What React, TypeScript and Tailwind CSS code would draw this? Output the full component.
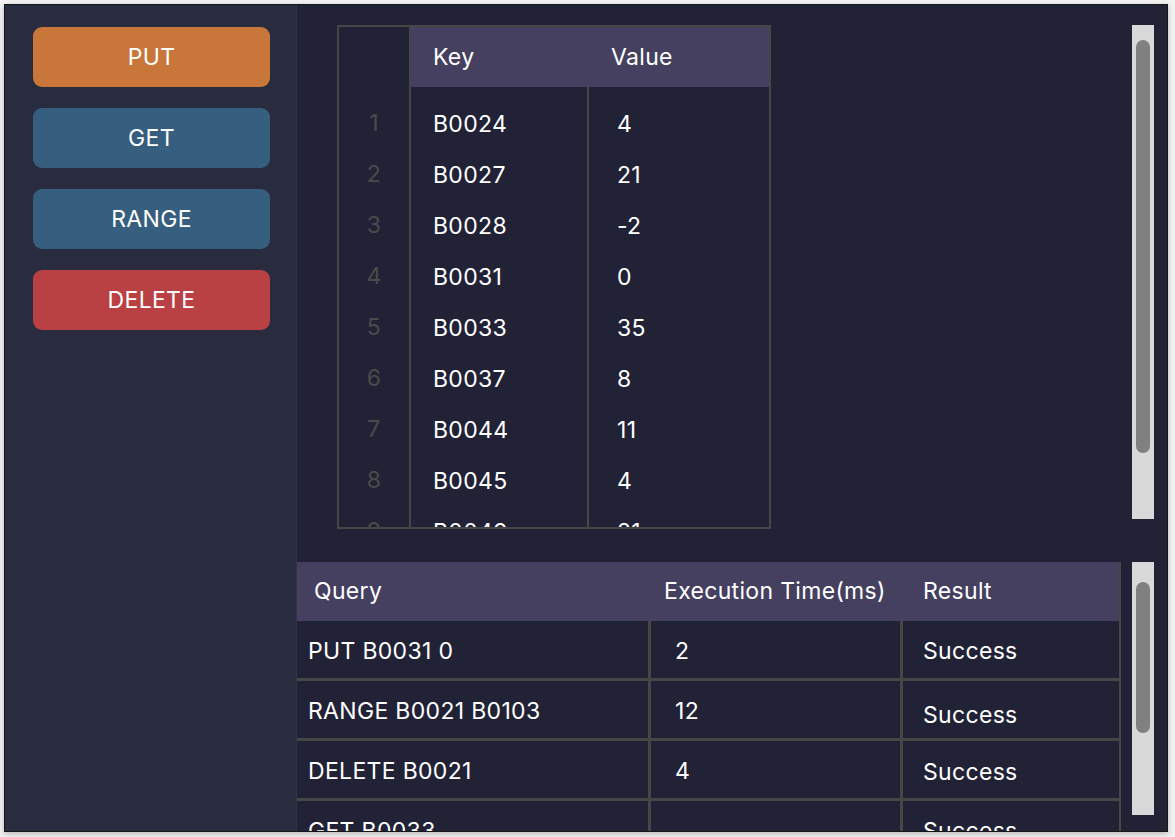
import React from 'react';

const keys = [
  ['B0024', '4'],
  ['B0027', '21'],
  ['B0028', '-2'],
  ['B0031', '0'],
  ['B0033', '35'],
  ['B0037', '8'],
  ['B0044', '11'],
  ['B0045', '4'],
  ['B0049', '21'],
];

const queries = [
  { q: 'PUT B0031 0', t: '2', r: 'Success', rp: 'pt-[4px]' },
  { q: 'RANGE B0021 B0103', t: '12', r: 'Success', rp: 'pt-[11px]' },
  { q: 'DELETE B0021', t: '4', r: 'Success', rp: 'pt-[6px]' },
  { q: 'GET B0033', t: '', r: 'Success', rp: 'pt-[4px]' },
];

const buttons = [
  { label: 'PUT', cls: 'bg-[#c8763a]' },
  { label: 'GET', cls: 'bg-[#365e7e]' },
  { label: 'RANGE', cls: 'bg-[#365e7e]' },
  { label: 'DELETE', cls: 'bg-[#b94043]' },
];

const Scrollbar: React.FC<{ h: string; thumbTop: string; thumbH: string }> = ({ h, thumbTop, thumbH }) => (
  <div className={`w-[22px] ${h} bg-[#d9d9d9] flex justify-center shrink-0`}>
    <div className={`w-[14px] ${thumbTop} ${thumbH} rounded-full bg-[#808080]`}></div>
  </div>
);

const App: React.FC = () => {
  return (
    <div
      className="w-[1175px] h-[837px] bg-[#f3f3f3] pl-[4px] pt-[4px] overflow-hidden tracking-[0.02em]"
      style={{ fontFamily: 'Inter, "Noto Sans", sans-serif' }}
    >
      <div className="w-[1164px] h-[828px] border border-[#161616] flex overflow-hidden shadow-[0_2px_6px_rgba(0,0,0,0.25)]">
        {/* sidebar */}
        <aside className="w-[292px] bg-[#292c3f] border-r border-[#313449] flex flex-col gap-[21px] pl-[28px] pt-[22px] shrink-0">
          {buttons.map((b) => (
            <button
              key={b.label}
              className={`w-[237px] h-[60px] rounded-[9px] ${b.cls} text-white text-[23px] flex items-center justify-center`}
            >
              {b.label}
            </button>
          ))}
        </aside>

        <main className="flex-1 bg-[#222236] flex flex-col">
          {/* key/value store */}
          <section className="h-[557px] flex pt-[20px] pl-[40px] pr-[13px]">
            <div className="w-[434px] h-[504px] border-2 border-[#464646] flex overflow-hidden text-[23px] text-white">
              <div className="w-[72px] border-r-2 border-[#464646] pt-[71px] shrink-0">
                {keys.map((_, i) => (
                  <div key={i} className="h-[51px] flex items-center justify-center text-[#4a4a4a]">
                    {i + 1}
                  </div>
                ))}
              </div>
              <div className="flex-1 flex flex-col">
                <div className="h-[60px] bg-[#45405f] flex items-center shrink-0">
                  <div className="w-[178px] pl-[22px]">Key</div>
                  <div className="pl-[22px]">Value</div>
                </div>
                <div className="flex-1 flex">
                  <div className="w-[178px] border-r-2 border-[#464646] pt-[12px]">
                    {keys.map(([k]) => (
                      <div key={k} className="h-[51px] flex items-center pl-[22px]">
                        {k}
                      </div>
                    ))}
                  </div>
                  <div className="flex-1 pt-[12px]">
                    {keys.map(([k, v]) => (
                      <div key={k} className="h-[51px] flex items-center pl-[28px]">
                        {v}
                      </div>
                    ))}
                  </div>
                </div>
              </div>
            </div>
            <div className="flex-1"></div>
            <Scrollbar h="h-[494px]" thumbTop="mt-[15px]" thumbH="h-[413px]" />
          </section>

          {/* query log */}
          <section className="flex-1 flex pr-[13px] overflow-hidden">
            <div className="w-[824px] border-r-2 border-[#464646] text-[23px] text-white overflow-hidden">
              <div className="h-[59px] bg-[#45405f] flex items-center">
                <div className="w-[354px] pl-[17px]">Query</div>
                <div className="w-[252px] pl-[13px]">Execution Time(ms)</div>
                <div className="pl-[20px]">Result</div>
              </div>
              {queries.map((row) => (
                <div key={row.q} className="h-[60px] flex border-b-[3px] border-[#464646]">
                  <div className="w-[354px] pl-[11px] pt-[4px] flex items-center border-r-[3px] border-[#464646]">
                    {row.q}
                  </div>
                  <div className="w-[252px] pl-[24px] pt-[4px] flex items-center border-r-[3px] border-[#464646]">
                    {row.t}
                  </div>
                  <div className={`flex-1 pl-[20px] flex items-center ${row.rp}`}>{row.r}</div>
                </div>
              ))}
            </div>
            <div className="flex-1"></div>
            <Scrollbar h="h-[253px]" thumbTop="mt-[20px]" thumbH="h-[151px]" />
          </section>
        </main>
      </div>
    </div>
  );
};

export default App;
